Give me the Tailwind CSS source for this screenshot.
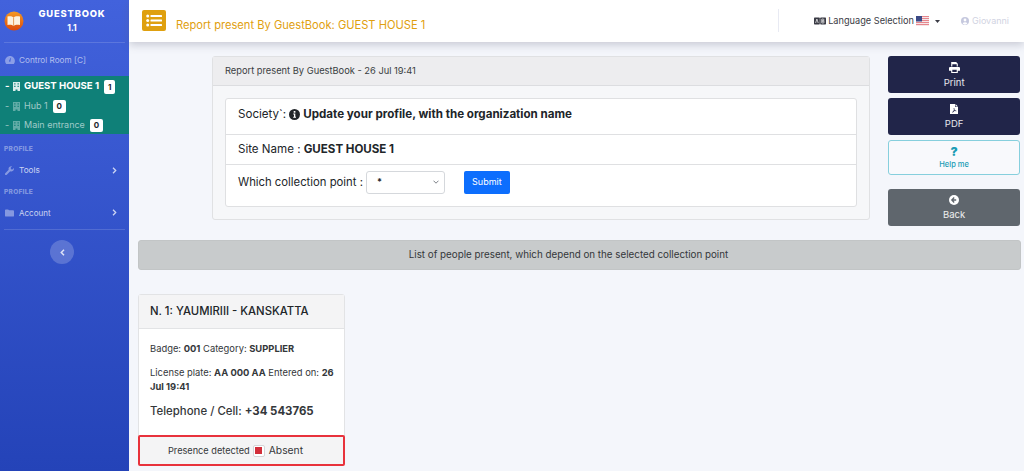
<!DOCTYPE html>
<html lang="en">
<head>
    <meta charset="UTF-8">
    <title>Report present | GuestBook</title>
    <script src="https://cdn.jsdelivr.net/npm/@tailwindcss/browser@4"></script>
</head>
<body class="h-[471px] w-[1024px] overflow-hidden flex bg-[#f4f6fb] text-[#212529] font-['Inter',sans-serif]">
    <!-- Sidebar -->
    <aside class="w-[129px] h-full shrink-0 bg-gradient-to-b from-[#4262dc] to-[#2443b8] text-white">
        <div class="h-[43px] mx-[4px] border-b border-white/15 flex">
            <svg class="w-[20px] h-[20px] mt-[11px] shrink-0" viewBox="0 0 20 20">
                <defs><linearGradient id="lg" x1="0" y1="0" x2="0" y2="1"><stop offset="0" stop-color="#f59a23"/><stop offset="1" stop-color="#dc4a0c"/></linearGradient></defs>
                <circle cx="10" cy="10" r="9.5" fill="url(#lg)"/>
                <path d="M3.500 5.500c2.400-.6 4.800-.3 6 1 1.200-1.300 3.600-1.600 6.500-1v8.500c-2.600-.5-5-.3-6.500.9-1.300-1.200-3.600-1.400-6-.9z" fill="#fdf3e0"/>
                <path d="M9.600 6.500v8.300" stroke="#e07a20" stroke-width=".7"/>
            </svg>
            <div class="flex-1 text-center pt-[7px] pr-[5px]">
                <div class="text-[9.400px] leading-[13px] font-extrabold tracking-[0.8px]">GUESTBOOK</div>
                <div class="text-[8.500px] leading-[10px] mt-[3px] font-bold">1.1</div>
            </div>
        </div>
        <div class="h-[33px] pt-[1px] pl-[5px] flex items-center gap-[4px] text-[8.2px] text-white/60">
            <svg class="w-[10px] h-[8px] text-white/40" viewBox="0 0 22 18" fill="currentColor"><path d="M11 0C5 0 0 5 0 11c0 2.400.8 4.800 2.100 6.500.3.300.7.500 1.100.500h15.600c.4 0 .8-.2 1.100-.5C21.200 15.800 22 13.400 22 11 22 5 17 0 11 0zm0 13a2 2 0 0 1-1.700-3l3-6 .8.300-1 6.200A2 2 0 0 1 11 13z"/></svg>
            <span>Control Room [C]</span>
        </div>
        <div class="h-[58px] bg-[#0f8078]">
            <div class="h-[20px] pt-[1px] pl-[5px] flex items-center text-[9.6px] font-bold">
                <span class="w-[8px]">-</span>
                <svg class="w-[7px] h-[9px] mr-[4px] text-white/85" viewBox="0 0 7 9" fill="currentColor"><path fill-rule="evenodd" d="M0 0h7v9H4.500V7.500h-2V9H0zM1.200 1.200v1.300h1.300V1.200zm3.300 0v1.300h1.300V1.200zM1.200 3.700V5h1.300V3.700zm3.300 0V5h1.300V3.700z"/></svg>
                <span>GUEST HOUSE 1</span>
                <span class="ml-[5px] w-[11px] h-[14px] rounded-[2px] bg-white text-[#212529] text-[8px] flex items-center justify-center">1</span>
            </div>
            <div class="h-[19px] pt-[1px] pl-[5px] flex items-center text-[9px] text-white/60">
                <span class="w-[8px]">-</span>
                <svg class="w-[7px] h-[9px] mr-[4px] text-white/35" viewBox="0 0 7 9" fill="currentColor"><path fill-rule="evenodd" d="M0 0h7v9H4.500V7.500h-2V9H0zM1.200 1.200v1.300h1.300V1.200zm3.300 0v1.300h1.300V1.200zM1.200 3.700V5h1.300V3.700zm3.300 0V5h1.300V3.700z"/></svg>
                <span>Hub 1</span>
                <span class="ml-[5px] w-[13px] h-[13px] rounded-[2px] bg-white text-[#212529] text-[8px] font-bold flex items-center justify-center">0</span>
            </div>
            <div class="h-[19px] pt-[1px] pl-[5px] flex items-center text-[9px] text-white/60">
                <span class="w-[8px]">-</span>
                <svg class="w-[7px] h-[9px] mr-[4px] text-white/35" viewBox="0 0 7 9" fill="currentColor"><path fill-rule="evenodd" d="M0 0h7v9H4.500V7.500h-2V9H0zM1.200 1.200v1.300h1.300V1.200zm3.300 0v1.300h1.300V1.200zM1.200 3.700V5h1.300V3.700zm3.300 0V5h1.300V3.700z"/></svg>
                <span>Main entrance</span>
                <span class="ml-[5px] w-[13px] h-[13px] rounded-[2px] bg-white text-[#212529] text-[8px] font-bold flex items-center justify-center">0</span>
            </div>
        </div>
        <div class="pl-[4px] mt-[11px] text-[6.500px] leading-[9px] font-extrabold tracking-[0.3px] text-white/40">PROFILE</div>
        <div class="h-[34px] pb-[2px] pl-[5px] pr-[12px] flex items-center text-[8.2px] text-white/75">
            <svg class="w-[9px] h-[9px] mr-[5px] text-white/40" viewBox="0 0 10 10" fill="currentColor"><path d="M9.800 2.300 8.200 3.900l-1.500-.4-.4-1.500L7.900.4a3 3 0 0 0-3.800 3.800L.3 8a1.200 1.200 0 0 0 1.700 1.700l3.800-3.800a3 3 0 0 0 4-3.600z"/></svg>
            <span class="flex-1">Tools</span>
            <svg class="w-[5px] h-[7px]" viewBox="0 0 5 7" fill="none" stroke="currentColor" stroke-width="1.300"><path d="m1 .8 2.700 2.700L1 6.200"/></svg>
        </div>
        <div class="pl-[4px] text-[6.500px] leading-[9px] font-extrabold tracking-[0.3px] text-white/40">PROFILE</div>
        <div class="h-[32px] pb-[1px] pl-[5px] pr-[12px] flex items-center text-[8px] text-white/75">
            <svg class="w-[9px] h-[8px] mr-[5px] text-white/40" viewBox="0 0 10 8" fill="currentColor"><path d="M0 1a1 1 0 0 1 1-1h2.500l1 1H9a1 1 0 0 1 1 1v5a1 1 0 0 1-1 1H1a1 1 0 0 1-1-1z"/></svg>
            <span class="flex-1">Account</span>
            <svg class="w-[5px] h-[7px]" viewBox="0 0 5 7" fill="none" stroke="currentColor" stroke-width="1.300"><path d="m1 .8 2.700 2.700L1 6.200"/></svg>
        </div>
        <div class="mx-[4px] border-t border-white/15"></div>
        <div class="mt-[10px] ml-[50px] w-[24px] h-[24px] rounded-full bg-white/20 flex items-center justify-center text-white/80">
            <svg class="w-[5px] h-[7px]" viewBox="0 0 5 7" fill="none" stroke="currentColor" stroke-width="1.500"><path d="M4 .8 1.300 3.500 4 6.200"/></svg>
        </div>
    </aside>

    <div class="flex-1 min-w-0">
        <!-- Topbar -->
        <header class="h-[42px] bg-white shadow-[0_3px_8px_rgba(90,95,120,0.28)] flex relative">
            <div class="w-[24px] h-[21px] mt-[10px] ml-[13px] rounded-[2px] bg-[#dfa00f] flex items-center justify-center">
                <svg class="w-[16px] h-[13px] text-white" viewBox="0 0 16 13" fill="currentColor"><circle cx="1.700" cy="2" r="1.500"/><circle cx="1.700" cy="6.500" r="1.500"/><circle cx="1.700" cy="11" r="1.500"/><rect x="4.500" y="1" width="11.500" height="2.100" rx=".5"/><rect x="4.500" y="5.400" width="11.500" height="2.100" rx=".5"/><rect x="4.500" y="9.900" width="11.500" height="2.100" rx=".5"/></svg>
            </div>
            <div class="ml-[10px] mt-[17px] text-[11.150px] leading-[16px] text-[#dfa00f]">Report present By GuestBook: GUEST HOUSE 1</div>
            <div class="ml-auto mt-[9px] h-[23px] border-l border-[#e8eaf3]"></div>
            <div class="ml-[35px] mt-[14px] h-[14px] flex items-center text-[9.200px] text-[#3a3b45]">
                <svg class="w-[12px] h-[8px] mr-[2px]" viewBox="0 0 12 8"><rect width="5.800" height="7" y=".5" rx=".7" fill="#3a3b45"/><rect x="6.200" y=".5" width="5.800" height="7" rx=".7" fill="#3a3b45"/><path d="M1.600 6 2.900 2l1.300 4M7.800 2v4h1.400a1 1 0 0 0 0-2H7.800h1.200a1 1 0 0 0 0-2z" fill="none" stroke="#fff" stroke-width=".7"/></svg>
                <span>Language Selection</span>
                <svg class="w-[13px] h-[10px] ml-[2px]" viewBox="0 0 13 10"><rect width="13" height="10" fill="#e6868d"/><path d="M0 1.500h13M0 3.500h13M0 5.500h13M0 7.500h13M0 9.500h13" stroke="#f6e6e8" stroke-width="1"/><rect width="6" height="5.500" fill="#3c4a86"/></svg>
                <svg class="w-[5px] h-[3px] ml-[6px]" viewBox="0 0 5 3" fill="#3a3b45"><path d="M0 0h5L2.500 3z"/></svg>
            </div>
            <div class="ml-[21px] mr-[15px] mt-[14px] h-[14px] flex items-center text-[9px] text-[#d1d3e2]">
                <svg class="w-[8px] h-[8px] mr-[3px]" viewBox="0 0 8 8"><circle cx="4" cy="4" r="4" fill="#c5c8de"/><circle cx="4" cy="3" r="1.400" fill="#fff"/><path d="M1.600 6.500a2.600 2 0 0 1 4.800 0 3.500 3.500 0 0 1-4.800 0z" fill="#fff"/></svg>
                <span>Giovanni</span>
            </div>
        </header>

        <main class="pl-[9px] pr-[4px]">
            <div class="flex">
                <!-- Report card -->
                <section class="ml-[74px] mt-[14px] w-[659px] h-[164px] border border-[#e0e1e3] rounded-[3px] bg-[#f6f7f9]">
                    <div class="h-[29px] px-[12px] bg-[#ededef] border-b border-[#dcdde0] flex items-center text-[9.300px] text-[#3a3d42]">Report present By GuestBook - 26 Jul 19:41</div>
                    <div class="mt-[12px] mx-[12px] h-[109px] bg-white border border-[#dfe0e2] rounded-[3px]">
                        <div class="h-[36px] px-[12px] border-b border-[#dfe0e2] flex items-center pb-[4px] text-[11.600px]">
                            <span>Society`:</span>
                            <svg class="w-[11px] h-[11px] mx-[3px]" viewBox="0 0 11 11"><circle cx="5.500" cy="5.500" r="5.500" fill="#212529"/><rect x="4.700" y="2" width="1.700" height="1.700" fill="#fff"/><path d="M4.200 4.600h2.100v3.200h.7v1H4.200v-1h.8V5.600h-.8z" fill="#fff"/></svg>
                            <span class="font-bold">Update your profile, with the organization name</span>
                        </div>
                        <div class="h-[30px] pt-[1px] px-[12px] border-b border-[#dfe0e2] flex items-center text-[11.550px]">
                            <span>Site Name :&nbsp;</span><span class="font-bold">GUEST HOUSE 1</span>
                        </div>
                        <div class="h-[35px] px-[12px] pb-[1px] flex items-center text-[11.300px]">
                            <span>Which collection point :</span>
                            <div class="ml-[3px] w-[79px] h-[23px] bg-white border border-[#d5d8dc] rounded-[3px] flex items-center justify-between pl-[10px] pr-[5px] text-[9px] font-bold">
                                <span>*</span>
                                <svg class="w-[6px] h-[4px]" viewBox="0 0 6 4" fill="none" stroke="#5a6068" stroke-width=".8"><path d="m.5.700 2.500 2.500L5.500.700"/></svg>
                            </div>
                            <div class="ml-[19px] w-[46px] h-[23px] rounded-[2px] bg-[#0d6efd] text-white text-[9px] flex items-center justify-center">Submit</div>
                        </div>
                    </div>
                </section>

                <!-- Side buttons -->
                <div class="ml-[18px] mt-[14px] w-[132px] flex flex-col">
                    <div class="h-[37px] pt-[3px] rounded-[3px] bg-[#212549] text-white/90 text-[9.500px] flex flex-col items-center justify-center">
                        <svg class="w-[11px] h-[11px] mb-[3px] text-white" viewBox="0 0 10 10" fill="currentColor"><path d="M2 0h4.500L8 1.500V4H7V2H3v2H2zM1 4.500h8a1 1 0 0 1 1 1V8H8v2H2V8H0V5.500a1 1 0 0 1 1-1zM3 7v2h4V7z"/></svg>
                        <span>Print</span>
                    </div>
                    <div class="mt-[5px] h-[37px] pt-[3px] rounded-[3px] bg-[#212549] text-white/90 text-[9.500px] flex flex-col items-center justify-center">
                        <svg class="w-[8px] h-[10px] mb-[3px] text-white" viewBox="0 0 8 10" fill="currentColor"><path fill-rule="evenodd" d="M0 0h5v3h3v7H0zM5.500 0 8 2.500H5.500zM4 4c-.5 0-.5 1 0 2L2 8.500c1 .3 1.500-.5 2.500-1.500l2 .2C6.500 6.500 5.500 6.500 4.600 6.200 4.500 5 4.500 4 4 4z"/></svg>
                        <span>PDF</span>
                    </div>
                    <div class="mt-[5px] h-[35px] rounded-[3px] bg-white/40 border border-[#86cfdd] text-[#1a9cb5] text-[7.500px] font-medium flex flex-col items-center justify-center">
                        <span class="text-[12px] leading-[12px] font-black">?</span>
                        <span class="mt-[2px] leading-[10px]">Help me</span>
                    </div>
                    <div class="mt-[14px] h-[37px] pt-[2px] rounded-[3px] bg-[#5f666d] text-white/90 text-[9.500px] flex flex-col items-center justify-center">
                        <svg class="w-[10px] h-[10px] mb-[3px]" viewBox="0 0 10 10"><circle cx="5" cy="5" r="5" fill="#fff"/><path d="M5.200 2.500 2.800 5l2.400 2.500M3 5h4.200" fill="none" stroke="#5f666d" stroke-width="1.300"/></svg>
                        <span>Back</span>
                    </div>
                </div>
            </div>

            <!-- List title -->
            <div class="mt-[14px] w-[883px] h-[30px] rounded-[3px] bg-[#c8cbcc] border border-[#c2c5c6] flex items-center justify-center pr-[22px] text-[9.800px] text-[#34373a]">List of people present, which depend on the selected collection point</div>

            <!-- Person card -->
            <article class="mt-[24px] w-[207px] h-[171px] rounded-[3px] border border-[#e2e3e5] bg-white relative">
                <div class="h-[34px] px-[11px] bg-[#f4f4f5] border-b border-[#e2e3e5] flex items-center text-[11.300px] font-medium">N. 1: YAUMIRIII - KANSKATTA</div>
                <div class="pl-[11px] pr-[6px] text-[9.400px] leading-[14px] text-[#34373a]">
                    <p class="pt-[13px]">Badge: <b>001</b> Category: <b>SUPPLIER</b></p>
                    <p class="mt-[10px]">License plate: <b>AA 000 AA</b> Entered on: <b>26</b> <b>Jul 19:41</b></p>
                    <p class="mt-[9px] text-[11.400px] leading-[16px] font-medium">Telephone / Cell: <b>+34 543765</b></p>
                </div>
                <div class="absolute left-[-1px] right-[-1px] top-[140px] h-[31px] bg-[#f4f4f5] border-2 border-[#e8323c] rounded-[2px] flex items-center justify-center text-[9.200px] pr-[12px] text-[#34373a]">
                    <span>Presence detected</span>
                    <span class="mx-[3px] w-[12px] h-[12px] rounded-[2px] border border-[#d5d5d8] bg-white flex items-center justify-center"><span class="w-[7px] h-[7px] bg-[#d22e3a]"></span></span>
                    <span class="text-[10.300px] ml-[1px]">Absent</span>
                </div>
            </article>
        </main>
    </div>
</body>
</html>
